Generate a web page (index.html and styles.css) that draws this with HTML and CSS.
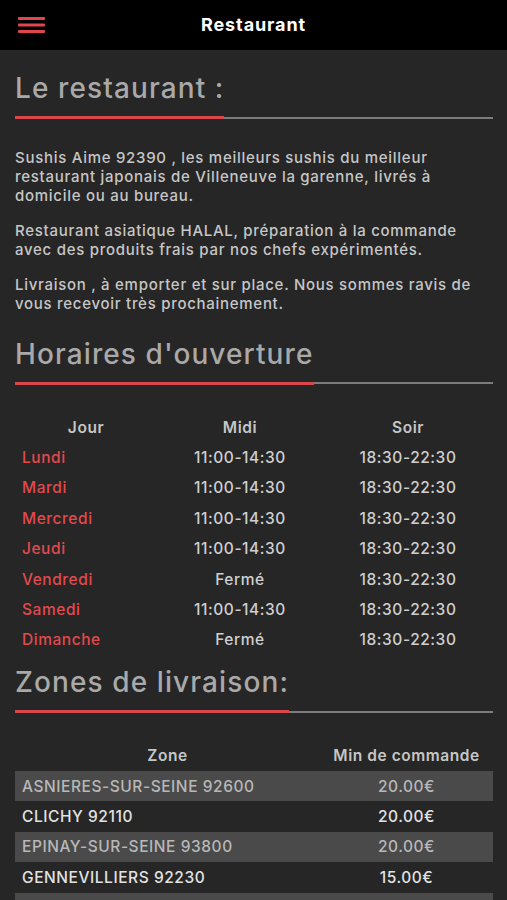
FILE: index.html
```html
<!DOCTYPE html>
<html lang="fr">
<head>
<meta charset="utf-8">
<title>Restaurant</title>
<link rel="stylesheet" href="styles.css">
</head>
<body>
<header class="topbar">
  <button class="menu-btn" aria-label="Menu">
    <svg width="28" height="18" viewBox="0 0 28 18"><rect x="0" y="0" width="27" height="3" rx="1" fill="#e0474c"/><rect x="0" y="6.5" width="27" height="3" rx="1" fill="#e0474c"/><rect x="0" y="13" width="27" height="3" rx="1" fill="#e0474c"/></svg>
  </button>
  <h1 class="topbar-title">Restaurant</h1>
</header>
<main class="content">
  <h2 class="section-title first"><span>Le restaurant :</span></h2>
  <div class="intro">
    <p>Sushis Aime 92390 , les meilleurs sushis du meilleur restaurant japonais de Villeneuve la garenne, livrés à domicile ou au bureau.</p>
    <p>Restaurant asiatique HALAL, préparation à la commande avec des produits frais par nos chefs expérimentés.</p>
    <p>Livraison , à emporter et sur place. Nous sommes ravis de vous recevoir très prochainement.</p>
  </div>

  <h2 class="section-title after-intro"><span>Horaires d'ouverture</span></h2>
  <table class="hours">
    <colgroup><col class="c-day"><col class="c-mid"><col class="c-eve"></colgroup>
    <thead><tr><th>Jour</th><th>Midi</th><th>Soir</th></tr></thead>
    <tbody>
      <tr><td class="day">Lundi</td><td>11:00-14:30</td><td>18:30-22:30</td></tr>
      <tr><td class="day">Mardi</td><td>11:00-14:30</td><td>18:30-22:30</td></tr>
      <tr><td class="day">Mercredi</td><td>11:00-14:30</td><td>18:30-22:30</td></tr>
      <tr><td class="day">Jeudi</td><td>11:00-14:30</td><td>18:30-22:30</td></tr>
      <tr><td class="day">Vendredi</td><td>Fermé</td><td>18:30-22:30</td></tr>
      <tr><td class="day">Samedi</td><td>11:00-14:30</td><td>18:30-22:30</td></tr>
      <tr><td class="day">Dimanche</td><td>Fermé</td><td>18:30-22:30</td></tr>
    </tbody>
  </table>

  <h2 class="section-title after-table"><span>Zones de livraison:</span></h2>
  <table class="zones">
    <colgroup><col class="c-zone"><col class="c-min"></colgroup>
    <thead><tr><th>Zone</th><th>Min de commande</th></tr></thead>
    <tbody>
      <tr><td class="zone">ASNIERES-SUR-SEINE 92600</td><td>20.00€</td></tr>
      <tr><td class="zone">CLICHY 92110</td><td>20.00€</td></tr>
      <tr><td class="zone">EPINAY-SUR-SEINE 93800</td><td>20.00€</td></tr>
      <tr><td class="zone">GENNEVILLIERS 92230</td><td>15.00€</td></tr>
      <tr class="peek"><td class="zone"></td><td></td></tr>
    </tbody>
  </table>
</main>
</body>
</html>
```

FILE: styles.css
```css
* { box-sizing: border-box; }
html, body { margin: 0; padding: 0; }
body {
  background: #262626;
  font-family: Inter, Roboto, "Liberation Sans", Arial, sans-serif;
  color: #c4c4c4;
  overflow: hidden;
}
.topbar {
  height: 50px;
  background: #000;
  display: flex;
  align-items: center;
  justify-content: center;
  position: relative;
}
.menu-btn {
  position: absolute;
  left: 18px;
  top: 17px;
  background: none;
  border: 0;
  padding: 0;
  line-height: 0;
}
.topbar-title {
  margin: 0;
  color: #fff;
  font-size: 18px;
  font-weight: 700;
  line-height: 22px;
  letter-spacing: 0.9px;
}
.content {
  padding: 0 14px 0 15px;
}
.section-title {
  margin: 0;
  font-size: 28px;
  font-weight: 500;
  line-height: 34px;
  letter-spacing: 1.1px;
  color: #a9a9a9;
  border-bottom: 2px solid #7c7c7c;
  white-space: nowrap;
}
.section-title span {
  display: inline-block;
  padding-bottom: 11px;
  border-bottom: 3px solid #d9474a;
  margin-bottom: -2.5px;
}
.section-title.first { margin-top: 21px; }
.section-title.after-intro { margin-top: 24px; }
.section-title.after-table { margin-top: 10px; }
.intro {
  padding-top: 29px;
}
.intro p {
  margin: 0 0 16px;
  font-size: 15px;
  font-weight: 500;
  line-height: 19px;
  letter-spacing: 0.72px;
  color: #c6c6c6;
}
.intro p:last-child { margin-bottom: 0; }
table {
  width: 100%;
  table-layout: fixed;
  border-collapse: collapse;
  margin-top: 28px;
  font-size: 15.5px;
  font-weight: 500;
  letter-spacing: 0.55px;
}
th, td {
  height: 30.4px;
  padding: 0 7px;
  text-align: center;
  white-space: nowrap;
}
th { color: #c6c6c6; font-weight: 600; }
td { color: #cfcfcf; }
.hours .c-day { width: 142px; }
.hours .c-mid { width: 166px; }
.hours td.day { text-align: left; color: #e24a4d; }
.zones .c-zone { width: 305px; }
.zones td.zone { text-align: left; }
.zones tbody tr:nth-child(odd) { background: #4a4a4a; }
.zones tbody tr:nth-child(odd) td { color: #b8b8b8; }
.zones tbody tr:nth-child(even) td { color: #e2e2e2; }
```
